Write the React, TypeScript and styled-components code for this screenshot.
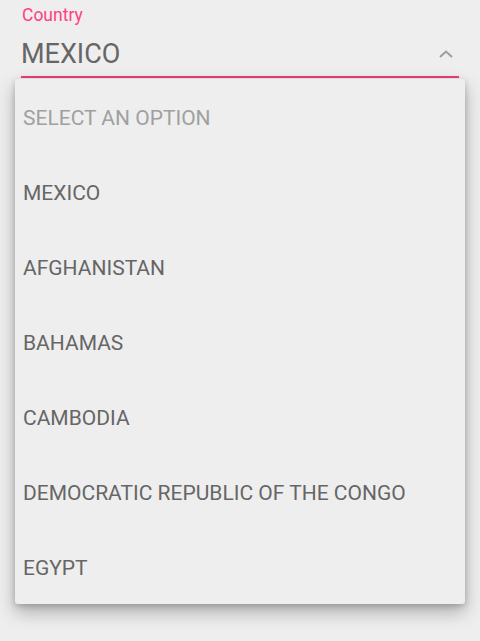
import React from "react";
import styled, { createGlobalStyle } from "styled-components";

const Global = createGlobalStyle`
  html, body { margin: 0; padding: 0; background: #eeeeee; }
  body { font-family: Roboto, "Noto Sans", sans-serif; }
`;

const Page = styled.div`
  width: 480px;
  height: 641px;
  background: #eeeeee;
  position: relative;
  overflow: hidden;
`;

const Field = styled.div`
  margin: 0 21px;
  padding-top: 5px;
`;

const Label = styled.div`
  color: #ff4081;
  font-size: 17.5px;
  line-height: 20px;
  padding-left: 1px;
`;

const ValueRow = styled.div`
  display: flex;
  align-items: center;
  justify-content: space-between;
  height: 53px;
  border-bottom: 2px solid #ec407a;
  box-sizing: border-box;
  padding-top: 6px;
`;

const Value = styled.div`
  color: #666666;
  font-size: 27px;
  line-height: 32px;
`;

const Chevron = styled.svg`
  width: 14px;
  height: 8px;
  margin-right: 6px;
`;

const Menu = styled.ul`
  position: absolute;
  left: 15px;
  top: 79px;
  width: 450px;
  margin: 0;
  padding: 0;
  list-style: none;
  background: #eeeeee;
  border-radius: 3px;
  box-shadow: 0 8px 18px rgba(0, 0, 0, 0.28), 0 2px 6px rgba(0, 0, 0, 0.18);
`;

const Item = styled.li<{ $placeholder?: boolean }>`
  height: 75px;
  display: flex;
  align-items: center;
  padding-left: 8px;
  padding-top: 2px;
  box-sizing: border-box;
  font-size: 21px;
  color: ${(p) => (p.$placeholder ? "#a0a0a0" : "#666666")};
`;

const options = [
  "MEXICO",
  "AFGHANISTAN",
  "BAHAMAS",
  "CAMBODIA",
  "DEMOCRATIC REPUBLIC OF THE CONGO",
  "EGYPT",
];

export default function App() {
  return (
    <Page>
      <Global />
      <Field>
        <Label>Country</Label>
        <ValueRow>
          <Value>MEXICO</Value>
          <Chevron viewBox="0 0 14 8">
            <path d="M1 7 L7 1.5 L13 7" fill="none" stroke="#9e9e9e" strokeWidth="2" />
          </Chevron>
        </ValueRow>
      </Field>
      <Menu>
        <Item $placeholder>SELECT AN OPTION</Item>
        {options.map((o) => (
          <Item key={o}>{o}</Item>
        ))}
      </Menu>
    </Page>
  );
}
